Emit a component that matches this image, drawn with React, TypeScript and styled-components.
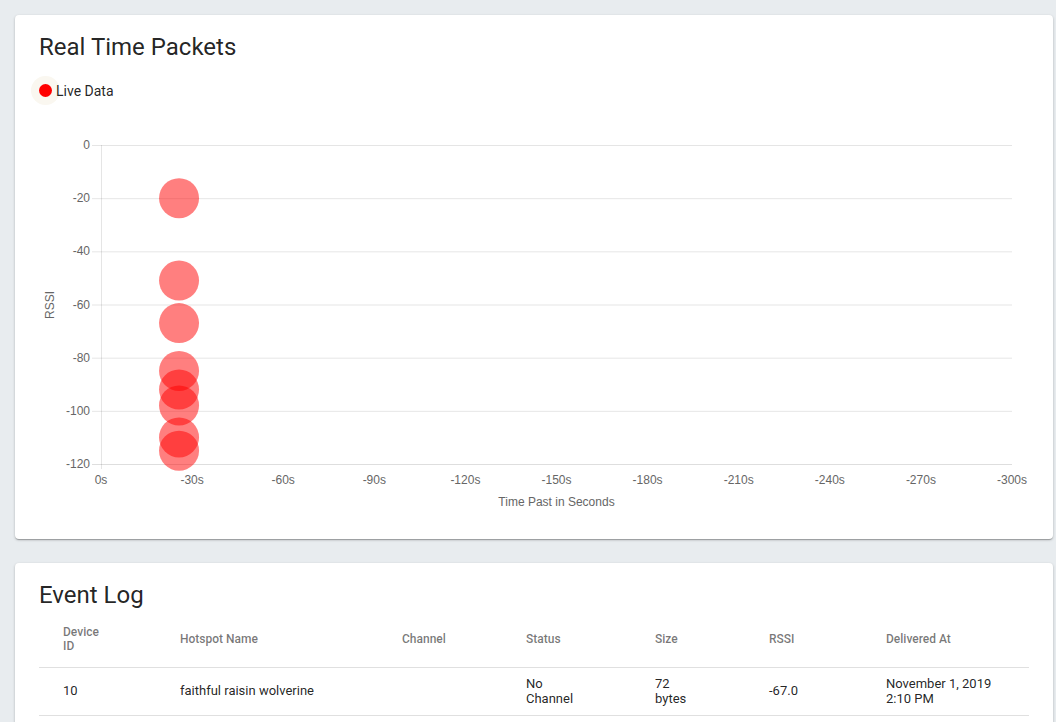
import React from 'react'
import styled, { createGlobalStyle } from 'styled-components'

const GlobalStyle = createGlobalStyle`
  * { box-sizing: border-box; }
  body {
    margin: 0;
    background: #e8ecef;
    font-family: Roboto, "Noto Sans", sans-serif;
    color: rgba(0, 0, 0, 0.87);
  }
`

const Page = styled.div`
  display: flex;
  flex-direction: column;
  gap: 24px;
  padding: 15px 3px 15px 15px;
`

const Card = styled.section`
  background: #fff;
  border-radius: 4px;
  padding: 16px 24px;
  box-shadow: 0 1px 3px rgba(0, 0, 0, 0.2), 0 1px 1px rgba(0, 0, 0, 0.14),
    0 2px 1px -1px rgba(0, 0, 0, 0.12);
`

const CardTitle = styled.h2`
  margin: 0;
  font-size: 24px;
  line-height: 32px;
  font-weight: 400;
  color: rgba(0, 0, 0, 0.87);
`

const Legend = styled.div`
  display: flex;
  align-items: center;
  gap: 4px;
  height: 27px;
  margin-top: 14px;
  font-size: 14px;
`

const LegendDot = styled.span<{ $color: string }>`
  width: 13px;
  height: 13px;
  border-radius: 50%;
  background: ${p => p.$color};
  box-shadow: 0 0 0 8px #faf7f0;
`

const ChartSvg = styled.svg`
  display: block;
  font-family: "Liberation Sans", Arial, sans-serif;
  font-size: 12px;
`

const Table = styled.div`
  display: flex;
  flex-direction: column;
`

const Row = styled.div<{ $head?: boolean }>`
  display: grid;
  grid-template-columns: 117px 222px 124px 129px 114px 117px 1fr;
  align-items: center;
  padding-left: 24px;
  height: ${p => (p.$head ? 57 : 48)}px;
  border-bottom: 1px solid #e0e0e0;
`

const Cell = styled.div<{ $head?: boolean; $wrap?: number }>`
  font-size: ${p => (p.$head ? 12 : 13)}px;
  font-weight: ${p => (p.$head ? 500 : 400)};
  line-height: 14.5px;
  color: ${p => (p.$head ? 'rgba(0, 0, 0, 0.54)' : 'rgba(0, 0, 0, 0.87)')};
  max-width: ${p => (p.$wrap ? `${p.$wrap}px` : 'none')};
`

// chart geometry (svg coords, svg starts at card content left)
const W = 990
const H = 419
const PL = 62
const PR = 973
const PT = 41
const PB = 360

const packets = [-20, -51, -67, -85, -92, -98, -110, -115]
const packetAge = -25.7

const xPos = (s: number) => PL + (-s / 300) * (PR - PL)
const yPos = (v: number) => PT + (-v / 120) * (PB - PT)

const RealTimeChart: React.FC = () => {
  const yTicks = [0, -20, -40, -60, -80, -100, -120]
  const xTicks = [0, -30, -60, -90, -120, -150, -180, -210, -240, -270, -300]
  return (
    <ChartSvg width={W} height={H} viewBox={`0 0 ${W} ${H}`}>
      {yTicks.map(t => (
        <g key={t}>
          <line x1={53} x2={PR} y1={yPos(t) + 0.5} y2={yPos(t) + 0.5}
            stroke={t === -120 ? 'rgba(0,0,0,0.13)' : 'rgba(0,0,0,0.1)'} />
          <text x={51} y={yPos(t) + 4} textAnchor="end" fill="#666">{t}</text>
        </g>
      ))}
      <line x1={PL + 0.5} x2={PL + 0.5} y1={PT} y2={PB + 5} stroke="rgba(0,0,0,0.1)" />
      {xTicks.map(t => (
        <text key={t} x={xPos(t)} y={380} textAnchor="middle" fill="#666">{t}s</text>
      ))}
      <text x={(PL + PR) / 2} y={402} textAnchor="middle" fill="#666">Time Past in Seconds</text>
      <text x={0} y={0} textAnchor="middle" fill="#666" transform="translate(15 201) rotate(-90)">RSSI</text>
      {packets.map((v, i) => (
        <circle key={i} cx={xPos(packetAge)} cy={yPos(v)} r={20} fill="rgba(255,0,0,0.5)" />
      ))}
    </ChartSvg>
  )
}

type LogEntry = {
  deviceId: string
  hotspot: string
  channel: string
  status: string
  size: string
  rssi: string
  deliveredAt: string
}

const log: LogEntry[] = [
  {
    deviceId: '10',
    hotspot: 'faithful raisin wolverine',
    channel: '',
    status: 'No Channel',
    size: '72 bytes',
    rssi: '-67.0',
    deliveredAt: 'November 1, 2019 2:10 PM',
  },
]

const App: React.FC = () => {
  return (
    <>
      <GlobalStyle />
      <Page>
        <Card>
          <CardTitle>Real Time Packets</CardTitle>
          <Legend>
            <LegendDot $color="#ff0000" />
            Live Data
          </Legend>
          <RealTimeChart />
        </Card>
        <Card>
          <CardTitle>Event Log</CardTitle>
          <Table>
            <Row $head>
              <Cell $head $wrap={45}>Device ID</Cell>
              <Cell $head>Hotspot Name</Cell>
              <Cell $head>Channel</Cell>
              <Cell $head>Status</Cell>
              <Cell $head>Size</Cell>
              <Cell $head>RSSI</Cell>
              <Cell $head>Delivered At</Cell>
            </Row>
            {log.map(e => (
              <Row key={e.deviceId + e.deliveredAt}>
                <Cell>{e.deviceId}</Cell>
                <Cell>{e.hotspot}</Cell>
                <Cell>{e.channel}</Cell>
                <Cell $wrap={55}>{e.status}</Cell>
                <Cell $wrap={40}>{e.size}</Cell>
                <Cell>{e.rssi}</Cell>
                <Cell $wrap={115}>{e.deliveredAt}</Cell>
              </Row>
            ))}
          </Table>
        </Card>
      </Page>
    </>
  )
}

export default App
